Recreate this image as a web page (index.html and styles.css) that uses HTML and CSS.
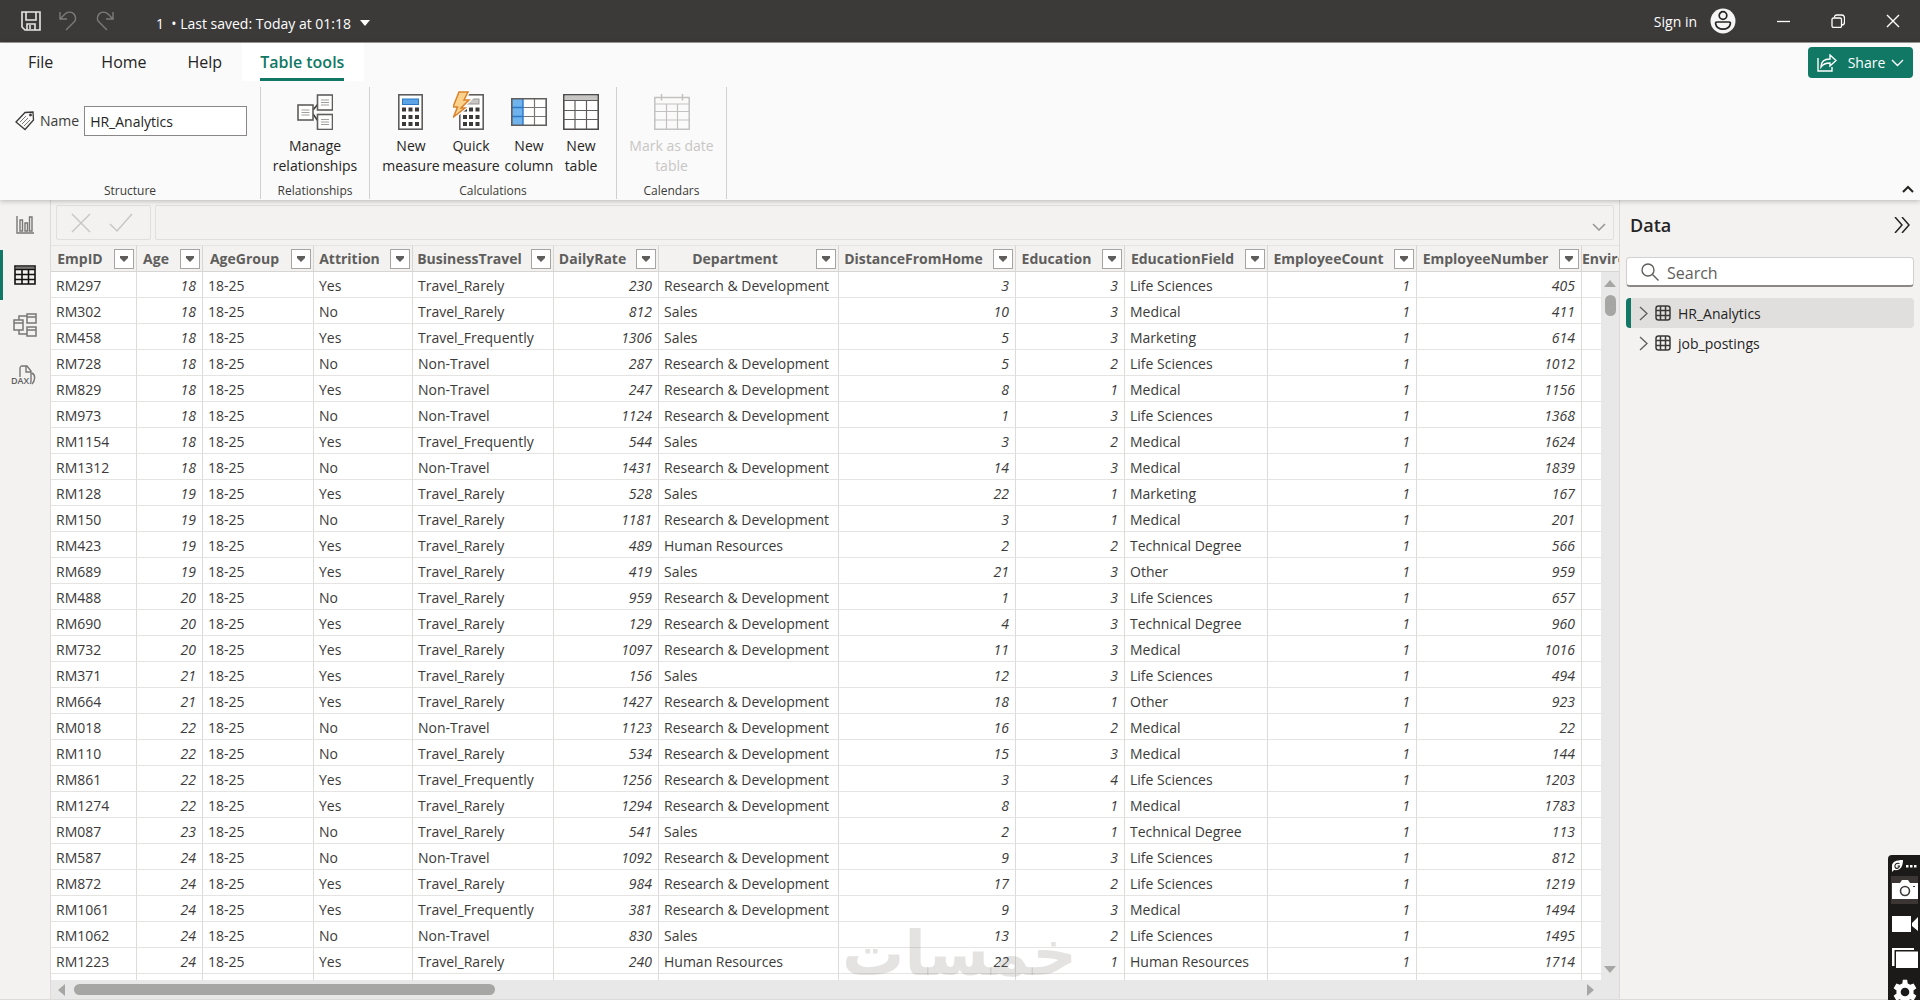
FILE: index.html
```html
<!DOCTYPE html>
<html lang="en">
<head>
  <meta charset="UTF-8" />
  <title>HR Analytics - Table view</title>
  <link rel="stylesheet" href="styles.css">
</head>
<body>
  <header class="titlebar">
    <button class="tb-btn" aria-label="Save">
      <svg width="20" height="20" viewBox="0 0 20 20" fill="none" stroke="#e6e6e6" stroke-width="1.6"><path d="M1 1h18v18H4l-3-3zM5 1v8h10V1M6 19v-6h8v6M9 14v4"/></svg>
    </button>
    <button class="tb-btn" aria-label="Undo">
      <svg width="18" height="20" viewBox="0 0 18 20" fill="none" stroke="#7d7b79" stroke-width="1.4"><path d="M1 1v7h7M1 8l5-5c3-3 7-2 9 0 2 3 2 6 0 8l-8 8"/></svg>
    </button>
    <button class="tb-btn" aria-label="Redo">
      <svg width="18" height="20" viewBox="0 0 18 20" fill="none" stroke="#7d7b79" stroke-width="1.4"><path d="M17 1v7h-7M17 8l-5-5C9 0 5 1 3 3c-2 3-2 6 0 8l8 8"/></svg>
    </button>
    <button class="file-name">1 &nbsp;• Last saved: Today at 01:18
      <svg width="10" height="6" viewBox="0 0 10 6" fill="#fff"><path d="M0 0h10L5 6z"/></svg>
    </button>
    <div class="window-side">
      <button class="sign-in">Sign in
        <svg width="26" height="26" viewBox="0 0 26 26"><circle cx="13" cy="13" r="12.5" fill="#f5f5f5"/><g fill="none" stroke="#252423" stroke-width="1.7"><circle cx="13" cy="7.5" r="3.8"/><path d="M7 14h12c1.500 0 1.500 1 1.300 2-.5 3-3.500 5.200-7.300 5.200S6.200 19 5.700 16c-.2-1-.2-2 1.300-2z"/></g></svg>
      </button>
      <button class="win-btn" aria-label="Minimize">
        <svg width="14" height="14" viewBox="0 0 14 14" stroke="#fff" stroke-width="1.3"><path d="M1 7.500h13"/></svg>
      </button>
      <button class="win-btn" aria-label="Restore">
        <svg width="14" height="14" viewBox="0 0 14 14" fill="none" stroke="#fff" stroke-width="1.3"><rect x="1" y="4" width="9.500" height="9.500" rx="1.500"/><path d="M3.500 3.500C3.500 2 4 1 6 1h4.500c2 0 3 1 3 3V8c0 2-1 3-2.500 3"/></svg>
      </button>
      <button class="win-btn" aria-label="Close">
        <svg width="14" height="14" viewBox="0 0 14 14" stroke="#fff" stroke-width="1.4"><path d="M1 1l12 12M13 1L1 13"/></svg>
      </button>
    </div>
  </header>

  <section class="ribbon">
    <nav class="tabs">
      <a class="tab tab-file" href="#">File</a>
      <a class="tab tab-home" href="#">Home</a>
      <a class="tab" href="#">Help</a>
      <a class="tab active" href="#"><span>Table tools</span></a>
      <button class="share-btn">
        <svg width="20" height="18" viewBox="0 0 20 18" fill="none" stroke="#fff" stroke-width="1.400"><path d="M1 4v13h14v-4"/><path d="M4 13c0-5 3-8 9-8V1l6 5.500-6 5.500V9c-4 0-7 1-9 4z"/></svg>
        <span>Share</span>
        <svg width="13" height="8" viewBox="0 0 13 8" fill="none" stroke="#fff" stroke-width="1.400"><path d="M1 1l5.500 5.500L12 1"/></svg>
      </button>
    </nav>

    <div class="groups">
      <div class="group group-structure">
        <div class="group-body name-row">
          <svg width="20" height="20" viewBox="0 0 20 20" fill="none" stroke="#3b3a39" stroke-width="1.300"><path d="M1 11L10 1.500l8-.5.500 8L10 18.500z"/><circle cx="15.500" cy="4" r=".8"/><path d="M5 11l6-6M7 13l6-6M9 15l6-6" stroke="#7a7876" stroke-width="1"/></svg>
          <label for="table-name">Name</label>
          <input type="text" id="table-name" value="HR_Analytics" />
        </div>
        <div class="group-label">Structure</div>
      </div>

      <div class="group group-relationships">
        <div class="group-body">
          <button class="tool">
            <svg width="36" height="36" viewBox="0 0 36 36" fill="#fff" stroke="#605e5c" stroke-width="1.600"><path d="M16 16l5-6M16 20l5 7" stroke="#3b3a39"/><rect x="1" y="11" width="15" height="15"/><rect x="20.500" y="1" width="15" height="15"/><rect x="20.500" y="20.500" width="15" height="15"/><path d="M4.500 16h8M4.500 18.500h8M4.500 21h8M24 6h8M24 8.500h8M24 11h8M24 25.500h8M24 28h8M24 30.500h8" stroke="#a19f9d" stroke-width="1"/></svg>
            <span>Manage<br>relationships</span>
          </button>
        </div>
        <div class="group-label">Relationships</div>
      </div>

      <div class="group group-calculations">
        <div class="group-body">
          <button class="tool tool-wide">
            <svg width="36" height="36" viewBox="0 0 36 36"><rect x="5.800" y=".8" width="23.400" height="34.400" fill="#fff" stroke="#605e5c" stroke-width="1.600"/><rect x="9.500" y="5" width="16" height="5.500" fill="#5ba4e5" stroke="#2b78c5"/><path d="M9 13.500h4v4H9zM15.500 13.500h4v4h-4zM22 13.500h4v4h-4zM9 21h4v4H9zM15.500 21h4v4h-4zM22 21h4v4h-4zM9 28h4v4H9zM15.500 28h4v4h-4zM22 28h4v4h-4z" fill="#3b3a39"/></svg>
            <span>New<br>measure</span>
          </button>
          <button class="tool tool-wide">
            <svg width="36" height="40" viewBox="3 -4 36 40"><rect x="9.800" y=".8" width="23.400" height="34.400" fill="#fff" stroke="#605e5c" stroke-width="1.600"/><rect x="15" y="5" width="14" height="5" fill="#c8c6c4" stroke="#979593"/><path d="M13 13.500h4v4h-4zM19 13.500h4v4h-4zM25.500 13.500h4v4h-4zM13 21h4v4h-4zM19 21h4v4h-4zM25.500 21h4v4h-4zM13 28h4v4h-4zM19 28h4v4h-4zM25.500 28h4v4h-4z" fill="#3b3a39"/><path d="M9-2h9l-4 8h5l-8 8h4L3.500 23l4-10H3z" fill="#fafafa" stroke="#fafafa" stroke-width="4"/><path d="M9-2h9l-4 8h5l-8 8h4L3.500 23l4-10H3z" fill="#fbd28b" stroke="#d9822b" stroke-width="1.500"/></svg>
            <span>Quick<br>measure</span>
          </button>
          <button class="tool tool-column">
            <svg width="36" height="36" viewBox="0 0 36 36"><path fill="#fff" d="M1 5h34v26H1z"/><path fill="#6fb3ee" d="M1 5h11v26H1z"/><path d="M12 13.500h23M12 22.500h23M23.500 5v26" stroke="#797775" stroke-width="1.200"/><path d="M1 13.500h11M1 22.500h11M12 5v26" stroke="#2b78c5" stroke-width="1.400"/><path fill="none" stroke="#605e5c" stroke-width="1.600" d="M.8 4.800h34.400v26.400H.8z"/></svg>
            <span>New<br>column</span>
          </button>
          <button class="tool">
            <svg width="36" height="36" viewBox="0 0 36 36"><path fill="#fff" stroke="#4f4d4b" stroke-width="1.600" d="M.8.8h34.400v34.400H.8z"/><path fill="#c8c6c4" d="M2 2h32v4H2z"/><path d="M1 6.500h34M1 16.500h34M1 25.500h34M12 6v29M23.500 6v29" stroke="#605e5c" stroke-width="1.200"/></svg>
            <span>New<br>table</span>
          </button>
        </div>
        <div class="group-label">Calculations</div>
      </div>

      <div class="group group-calendars">
        <div class="group-body">
          <button class="tool" disabled>
            <svg width="36" height="36" viewBox="0 0 36 36" fill="none" stroke="#c4c2c0" stroke-width="1.500"><path d="M.8 3.500h34.400v31.700H.8zM7.500 0v6.500M28.500 0v6.500"/><path d="M1 10h34M1 17.500h34M1 26h34M12.500 10v25M23.500 10v25" stroke-width="1.200"/></svg>
            <span>Mark as date<br>table</span>
          </button>
        </div>
        <div class="group-label">Calendars</div>
      </div>

      <button class="collapse-btn" aria-label="Collapse ribbon">
        <svg width="12" height="8" viewBox="0 0 12 8" fill="none" stroke="#252423" stroke-width="2"><path d="M1 7l5-5 5 5"/></svg>
      </button>
    </div>
  </section>

  <main class="workspace">
    <nav class="views">
      <a class="view" href="#" aria-label="Report view">
        <svg width="18" height="18" viewBox="0 0 18 18" fill="none" stroke="#797775" stroke-width="1.400"><path d="M1 0v17h17M4 15V4h2.500v11zM9 15V7h2.500v8zM13.500 15V1H16v14z"/></svg>
      </a>
      <a class="view active" href="#" aria-label="Table view">
        <svg width="22" height="20" viewBox="0 0 22 20" fill="none" stroke="#111" stroke-width="1.600"><path d="M1 1h20v18H1zM1 4.500h20M1 9.500h20M1 14.500h20M8 4v15M14.500 4v15"/><path d="M1 3h20" stroke="#555"/></svg>
      </a>
      <a class="view" href="#" aria-label="Model view">
        <svg width="24" height="24" viewBox="0 0 24 24" fill="none" stroke="#797775" stroke-width="1.500"><path d="M1 7h9v10H1zM1 10h9M14 1h9v9h-9zM14 4h9M14 14h9v9h-9zM14 17h9M6 7V3h8M6 17v4h8"/></svg>
      </a>
      <a class="view view-dax" href="#" aria-label="DAX query view">
        <svg width="22" height="20" viewBox="0 0 22 20" fill="none" stroke="#797775" stroke-width="1.400"><path d="M6 12V3c0-1 1-2 2-2h5l4 5v10c0 1 0 2-1 3M12 1v6h5M18 8c4 2 3 8 0 11"/></svg>
        <span>DAX</span>
      </a>
    </nav>

    <section class="table-area">
      <div class="formula-bar">
        <div class="formula-actions">
          <button aria-label="Cancel"><svg width="20" height="20" viewBox="0 0 20 20" stroke="#c8c6c4" stroke-width="1.400"><path d="M1 1l18 18M19 1L1 19"/></svg></button>
          <button aria-label="Commit"><svg width="24" height="20" viewBox="0 0 24 20" fill="none" stroke="#c8c6c4" stroke-width="1.500"><path d="M1 11l7 7L23 1"/></svg></button>
        </div>
        <div class="formula-box">
          <input type="text" aria-label="Formula" />
          <button aria-label="Expand formula bar"><svg width="14" height="8" viewBox="0 0 14 8" fill="none" stroke="#979593" stroke-width="1.500"><path d="M1 1l6 6 6-6"/></svg></button>
        </div>
      </div>

      <div class="grid">
        <table>
          <colgroup>
            <col class="c-id"><col class="c-age"><col class="c-group"><col class="c-attrition"><col class="c-travel"><col class="c-rate"><col class="c-dept"><col class="c-distance"><col class="c-edu"><col class="c-field"><col class="c-count"><col class="c-number"><col class="c-env">
          </colgroup>
          <thead><tr id="grid-head"></tr></thead>
          <tbody id="grid-body"></tbody>
        </table>
        <div class="vscroll">
          <span class="arrow arrow-up"></span>
          <span class="vthumb"></span>
          <span class="arrow arrow-down"></span>
        </div>
        <div class="watermark" lang="ar">خمسات</div>
      </div>
      <div class="hscroll">
        <span class="arrow arrow-left"></span>
        <div class="htrack"><span class="hthumb"></span></div>
        <span class="arrow arrow-right"></span>
      </div>
    </section>

    <aside class="data-pane">
      <div class="pane-head">
        <h2>Data</h2>
        <button aria-label="Collapse pane"><svg width="16" height="16" viewBox="0 0 16 16" fill="none" stroke="#252423" stroke-width="1.500"><path d="M1 0l7 8-7 8M8 0l7 8-7 8"/></svg></button>
      </div>
      <div class="search">
        <svg width="18" height="18" viewBox="0 0 18 18" fill="none" stroke="#605e5c" stroke-width="1.400"><circle cx="7" cy="7" r="6"/><path d="M11.500 11.500l6 6"/></svg>
        <input type="text" placeholder="Search" aria-label="Search" />
      </div>
      <ul class="tables">
        <li class="selected">
          <a href="#">
            <svg width="9" height="15" viewBox="0 0 9 15" fill="none" stroke="#605e5c" stroke-width="1.300"><path d="M1 1l7 6.500L1 14"/></svg>
            <svg width="16" height="16" viewBox="0 0 16 16" fill="none" stroke="#3b3a39" stroke-width="1.500"><rect x="1" y="1" width="14" height="14" rx="2.500"/><path d="M1 5.500h14M1 10.500h14M5.500 1v14M10.500 1v14"/></svg>
            HR_Analytics
          </a>
        </li>
        <li>
          <a href="#">
            <svg width="9" height="15" viewBox="0 0 9 15" fill="none" stroke="#605e5c" stroke-width="1.300"><path d="M1 1l7 6.500L1 14"/></svg>
            <svg width="16" height="16" viewBox="0 0 16 16" fill="none" stroke="#3b3a39" stroke-width="1.500"><rect x="1" y="1" width="14" height="14" rx="2.500"/><path d="M1 5.500h14M1 10.500h14M5.500 1v14M10.500 1v14"/></svg>
            job_postings
          </a>
        </li>
      </ul>
    </aside>
  </main>

  <div class="recorder">
    <div class="recorder-top">
      <svg width="11" height="12" viewBox="0 0 11 12"><path d="M0 12V6c0-4 4-6 11-6 0 7-3 11-9 10z" fill="#fff"/><path d="M7.500 3.500c-3-1-5 1-4.500 3.500.5 2 4 2 4.500-1H5.500" fill="none" stroke="#1b1a19" stroke-width="1.100"/></svg>
      <svg width="11" height="3" viewBox="0 0 11 3" fill="#fff"><path d="M0 0h2.500v2.500H0zM4 0h2.500v2.500H4zM8 0h2.500v2.500H8z"/></svg>
    </div>
    <button class="rec-btn on" aria-label="Take screenshot">
      <svg width="26" height="20" viewBox="0 0 26 20"><path d="M0 3h8l2-3h6l2 3h8v16H0z" fill="#fff"/><circle cx="13" cy="11" r="4.500" fill="#fff" stroke="#3b3a39" stroke-width="1.600"/><path d="M21 6h2v1h-2z" fill="#333"/></svg>
    </button>
    <button class="rec-btn" aria-label="Record video">
      <svg width="26" height="18" viewBox="0 0 26 18" fill="#fff"><path d="M0 1h19v16H0zM20 8l6-6v14l-6-5z"/></svg>
    </button>
    <button class="rec-btn" aria-label="Gallery">
      <svg width="26" height="20" viewBox="0 0 26 20" fill="#fff"><path d="M0 0h22v2H2.500v16H0z"/><path d="M4 3.500h22V20H4z"/></svg>
    </button>
    <button class="rec-btn" aria-label="Settings">
      <svg width="26" height="26" viewBox="0 0 24 24" fill="#fff"><path d="M19.800 13.300a8 8 0 000-2.600l2.700-2.100-2.600-4.500-3.200 1.300a8 8 0 00-2.200-1.300L14 .6H10l-.5 3.500a8 8 0 00-2.200 1.300L4.100 4.100 1.500 8.600l2.700 2.100a8 8 0 000 2.600l-2.700 2.100 2.600 4.500 3.200-1.300a8 8 0 002.200 1.300l.5 3.500h4l.5-3.500a8 8 0 002.200-1.300l3.200 1.300 2.600-4.500zM12 16a4 4 0 110-8 4 4 0 010 8z"/></svg>
    </button>
  </div>

  <script src="script.js"></script>
</body>
</html>
```

FILE: styles.css
```css
* {
  box-sizing: border-box;
}

body {
  margin: 0;
  height: 100vh;
  display: flex;
  flex-direction: column;
  overflow: hidden;
  font-family: "Open Sans", "Noto Sans", sans-serif;
  font-size: 14px;
  color: #252423;
  background: #f3f2f1;
}

button {
  font: inherit;
  color: inherit;
  background: none;
  border: none;
  padding: 0;
}

a {
  color: inherit;
  text-decoration: none;
}

svg {
  display: block;
  flex: none;
}

/* Title bar */
.titlebar {
  flex: none;
  display: flex;
  align-items: center;
  height: 43px;
  padding-left: 12px;
  background: #3b3a39;
  border-bottom: 1px solid #a19f9d;
  color: #fff;
}

.tb-btn {
  width: 37px;
  display: flex;
  justify-content: center;
}

.file-name {
  display: flex;
  align-items: center;
  gap: 9px;
  margin-left: 33px;
  padding-top: 4px;
}

.window-side {
  display: flex;
  align-items: center;
  margin-left: auto;
}

.sign-in {
  display: flex;
  align-items: center;
  gap: 13px;
  margin-right: 19px;
}

.win-btn {
  width: 55px;
  display: flex;
  justify-content: center;
}

/* Ribbon */
.ribbon {
  flex: none;
  position: relative;
  background: #fafafa;
  box-shadow: 0 1px 5px rgba(0, 0, 0, 0.25);
}

.tabs {
  display: flex;
  height: 38px;
  font-size: 16px;
}

.tab {
  padding: 8px 20px 0 19px;
  line-height: 22px;
}

.tab-file {
  padding-left: 28px;
  padding-right: 29px;
}

.tab-home {
  padding-right: 22px;
}

.tab.active {
  padding-left: 18px;
  background: #fff;
  color: #117865;
  font-weight: 600;
}

.tab.active span {
  display: block;
  height: 30px;
  border-bottom: 3px solid #117865;
}

.share-btn {
  display: flex;
  align-items: center;
  justify-content: center;
  gap: 6px;
  width: 105px;
  height: 31px;
  margin: 4px 7px 0 auto;
  border-radius: 4px;
  background: #117865;
  color: #fff;
  font-size: 14px;
}

.share-btn span {
  margin-left: 5px;
}

.groups {
  display: flex;
  padding: 6px 0 1px;
}

.group {
  display: flex;
  flex-direction: column;
  height: 112px;
  border-right: 1px solid #d2d0ce;
}

.group-structure {
  width: 261px;
}

.group-relationships {
  width: 109px;
}

.group-calculations {
  width: 247px;
}

.group-calendars {
  width: 110px;
}

.group-body {
  flex: 1;
  display: flex;
  justify-content: center;
  align-items: flex-start;
  padding-top: 7px;
}

.group-label {
  height: 16px;
  line-height: 16px;
  font-size: 12px;
  text-align: center;
  color: #3b3a39;
}

.name-row {
  justify-content: flex-start;
  align-items: center;
  gap: 5px;
  padding: 0 13px 29px 15px;
  color: #3b3a39;
}

.name-row input {
  flex: 1;
  min-width: 0;
  height: 30px;
  padding: 1px 5px 0;
  border: 1px solid #8a8886;
  background: #fff;
  font: inherit;
  color: #252423;
}

.tool {
  display: flex;
  flex-direction: column;
  align-items: center;
  justify-content: flex-end;
  gap: 6px;
  min-width: 48px;
  height: 82px;
  line-height: 20px;
  white-space: nowrap;
}

.tool-wide {
  width: 60px;
}

.tool-column {
  width: 56px;
}

.tool:disabled {
  color: #c8c6c4;
}

.collapse-btn {
  align-self: flex-end;
  margin: 0 6px 6px auto;
}

/* Workspace */
.workspace {
  flex: 1;
  display: flex;
  min-height: 0;
  border-bottom: 1px solid #dcdbda;
}

.views {
  width: 51px;
  border-right: 1px solid #dcdbda;
}

.view {
  display: flex;
  flex-direction: column;
  align-items: center;
  justify-content: center;
  height: 50px;
}

.view.active {
  border-left: 3px solid #117865;
  padding-right: 3px;
}

.view-dax span {
  margin: -8px 10px 0 0;
  background: #f3f2f1;
  font-size: 9px;
  font-weight: 600;
  line-height: 8px;
  color: #605e5c;
}

.table-area {
  flex: 1;
  min-width: 0;
  display: flex;
  flex-direction: column;
}

.formula-bar {
  display: flex;
  gap: 4px;
  padding: 5px;
}

.formula-actions,
.formula-box {
  display: flex;
  align-items: center;
  height: 35px;
  border: 1px solid #e1dfdd;
  border-radius: 2px;
}

.formula-actions {
  width: 95px;
  padding-left: 14px;
  gap: 18px;
}

.formula-box {
  flex: 1;
  padding-right: 7px;
}

.formula-box input {
  flex: 1;
  border: none;
  background: none;
}

.formula-box button {
  padding-top: 8px;
}

/* Data grid */
.grid {
  flex: 1;
  min-height: 0;
  position: relative;
  overflow: hidden;
  background: #fff;
}

table {
  table-layout: fixed;
  width: 1730px;
  border-collapse: separate;
  border-spacing: 0;
}

.c-id { width: 86px; }
.c-age { width: 66px; }
.c-group { width: 111px; }
.c-attrition { width: 99px; }
.c-travel { width: 141px; }
.c-rate { width: 105px; }
.c-dept { width: 180px; }
.c-distance { width: 177px; }
.c-edu { width: 109px; }
.c-field { width: 143px; }
.c-count { width: 149px; }
.c-number { width: 165px; }
.c-env { width: 199px; }

th {
  height: 27px;
  padding: 0;
  background: #f3f2f1;
  border-top: 1px solid #e5e4e3;
  border-right: 1px solid #d6d5d4;
  border-bottom: 1px solid #d6d5d4;
  font-size: 14px;
  font-weight: 700;
  color: #605e5c;
}

.head-cell {
  display: flex;
  align-items: center;
  padding-right: 2px;
}

.head-cell span {
  flex: 1;
  padding-right: 5px;
  text-align: center;
  line-height: 20px;
}

.filter-btn {
  display: flex;
  align-items: center;
  justify-content: center;
  width: 20px;
  height: 20px;
  background: #fff;
  border: 1px solid #a6a5a4;
}

td {
  height: 26px;
  padding: 3px 6px 0 5px;
  border-right: 1px solid #dddcdb;
  border-bottom: 1px solid #e5e4e3;
  line-height: 20px;
  white-space: nowrap;
  color: #3b3a39;
}

td.num {
  text-align: right;
  font-style: italic;
}

.arrow {
  flex: none;
  width: 0;
  height: 0;
  border: 6px solid transparent;
}

.arrow-up {
  border-top: none;
  border-bottom: 7px solid #a6a6a5;
}

.arrow-down {
  border-bottom: none;
  border-top: 7px solid #a6a6a5;
}

.arrow-left {
  border-left: none;
  border-right: 7px solid #a6a6a5;
}

.arrow-right {
  border-right: none;
  border-left: 7px solid #a6a6a5;
}

.vscroll {
  position: absolute;
  top: 27px;
  right: 0;
  bottom: 0;
  width: 18px;
  display: flex;
  flex-direction: column;
  align-items: center;
  padding: 8px 0 7px;
  background: #e8e8e8;
}

.vthumb {
  width: 11px;
  height: 21px;
  margin-top: 8px;
  border-radius: 6px;
  background: #a6a6a5;
}

.vscroll .arrow-down {
  margin-top: auto;
}

.hscroll {
  display: flex;
  align-items: center;
  gap: 9px;
  height: 19px;
  padding: 0 25px 0 7px;
  background: #e8e8e8;
}

.htrack {
  flex: 1;
}

.hthumb {
  display: block;
  width: 28%;
  height: 11px;
  border-radius: 6px;
  background: #a6a6a5;
}

.watermark {
  position: absolute;
  right: 542px;
  bottom: 0;
  font-family: "DejaVu Sans", sans-serif;
  font-size: 62px;
  font-weight: 700;
  line-height: 52px;
  color: rgba(120, 115, 110, 0.2);
  pointer-events: none;
}

/* Data pane */
.data-pane {
  width: 301px;
  padding: 0 6px;
  border-left: 1px solid #dcdbda;
}

.pane-head {
  display: flex;
  align-items: center;
  justify-content: space-between;
  height: 50px;
  padding: 0 4px;
}

.pane-head h2 {
  margin: 0;
  font-size: 18px;
  font-weight: 600;
}

.search {
  display: flex;
  align-items: center;
  gap: 8px;
  height: 30px;
  margin-top: 7px;
  padding: 0 14px;
  background: #fff;
  border: 1px solid #d2d0ce;
  border-bottom: 2px solid #8a8886;
  border-radius: 4px;
}

.search input {
  flex: 1;
  min-width: 0;
  padding: 2px 0 0;
  border: none;
  background: none;
  font: inherit;
  font-size: 16px;
}

.search input::placeholder {
  color: #605e5c;
}

.tables {
  list-style: none;
  margin: 11px 0 0;
  padding: 0;
}

.tables li {
  height: 30px;
  border-left: 5px solid transparent;
  border-radius: 4px;
}

.tables li.selected {
  background: #e1dfdd;
  border-left-color: #117865;
}

.tables a {
  display: flex;
  align-items: center;
  gap: 7px;
  height: 30px;
  padding-left: 8px;
}

/* Floating recorder strip */
.recorder {
  position: absolute;
  right: 0;
  bottom: 0;
  width: 32px;
  height: 145px;
  overflow: hidden;
  padding: 5px 2px 0 3px;
  border-radius: 4px 0 0 0;
  background: #1b1a19;
}

.recorder-top {
  display: flex;
  align-items: center;
  justify-content: space-between;
  height: 12px;
  margin: 0 1px 4px;
}

.rec-btn {
  display: flex;
  align-items: center;
  justify-content: center;
  width: 27px;
  height: 28px;
  margin-bottom: 6px;
}

.rec-btn.on {
  background: #3b3634;
}
```

FILE: script.js
```javascript
const columns = ["EmpID", "Age", "AgeGroup", "Attrition", "BusinessTravel", "DailyRate", "Department",
  "DistanceFromHome", "Education", "EducationField", "EmployeeCount", "EmployeeNumber", "EnvironmentSatisfaction"];

// id, age, attrition, travel, rate, department, distance, education, field, number
const employees = `RM297,18,Yes,Travel_Rarely,230,Research & Development,3,3,Life Sciences,405
RM302,18,No,Travel_Rarely,812,Sales,10,3,Medical,411
RM458,18,Yes,Travel_Frequently,1306,Sales,5,3,Marketing,614
RM728,18,No,Non-Travel,287,Research & Development,5,2,Life Sciences,1012
RM829,18,Yes,Non-Travel,247,Research & Development,8,1,Medical,1156
RM973,18,No,Non-Travel,1124,Research & Development,1,3,Life Sciences,1368
RM1154,18,Yes,Travel_Frequently,544,Sales,3,2,Medical,1624
RM1312,18,No,Non-Travel,1431,Research & Development,14,3,Medical,1839
RM128,19,Yes,Travel_Rarely,528,Sales,22,1,Marketing,167
RM150,19,No,Travel_Rarely,1181,Research & Development,3,1,Medical,201
RM423,19,Yes,Travel_Rarely,489,Human Resources,2,2,Technical Degree,566
RM689,19,Yes,Travel_Rarely,419,Sales,21,3,Other,959
RM488,20,No,Travel_Rarely,959,Research & Development,1,3,Life Sciences,657
RM690,20,Yes,Travel_Rarely,129,Research & Development,4,3,Technical Degree,960
RM732,20,Yes,Travel_Rarely,1097,Research & Development,11,3,Medical,1016
RM371,21,Yes,Travel_Rarely,156,Sales,12,3,Life Sciences,494
RM664,21,Yes,Travel_Rarely,1427,Research & Development,18,1,Other,923
RM018,22,No,Non-Travel,1123,Research & Development,16,2,Medical,22
RM110,22,No,Travel_Rarely,534,Research & Development,15,3,Medical,144
RM861,22,Yes,Travel_Frequently,1256,Research & Development,3,4,Life Sciences,1203
RM1274,22,Yes,Travel_Rarely,1294,Research & Development,8,1,Medical,1783
RM087,23,No,Travel_Rarely,541,Sales,2,1,Technical Degree,113
RM587,24,No,Non-Travel,1092,Research & Development,9,3,Life Sciences,812
RM872,24,Yes,Travel_Rarely,984,Research & Development,17,2,Life Sciences,1219
RM1061,24,Yes,Travel_Frequently,381,Research & Development,9,3,Medical,1494
RM1062,24,No,Non-Travel,830,Sales,13,2,Life Sciences,1495
RM1223,24,Yes,Travel_Rarely,240,Human Resources,22,1,Human Resources,1714`;

const numeric = [1, 5, 7, 8, 10, 11];

document.getElementById("grid-head").innerHTML = columns.map(name => `
  <th scope="col"><div class="head-cell"><span>${name}</span>
    <button class="filter-btn" aria-label="Filter ${name}">
      <svg width="8" height="6" viewBox="0 0 8 6" fill="#605e5c"><path d="M0 0h8v2L4 6 0 2z"/></svg>
    </button></div></th>`).join("");

const rows = employees.split("\n").map(line => {
  const [id, age, attrition, travel, rate, dept, distance, edu, field, number] = line.split(",");
  return [id, age, "18-25", attrition, travel, rate, dept, distance, edu, field, "1", number, ""];
});

// one empty row shows below the last record
rows.push(columns.map(() => ""));

document.getElementById("grid-body").innerHTML = rows.map(row =>
  "<tr>" + row.map((value, i) =>
    `<td${numeric.includes(i) ? ' class="num"' : ""}>${value.replace("&", "&amp;")}</td>`).join("") + "</tr>"
).join("");
```
